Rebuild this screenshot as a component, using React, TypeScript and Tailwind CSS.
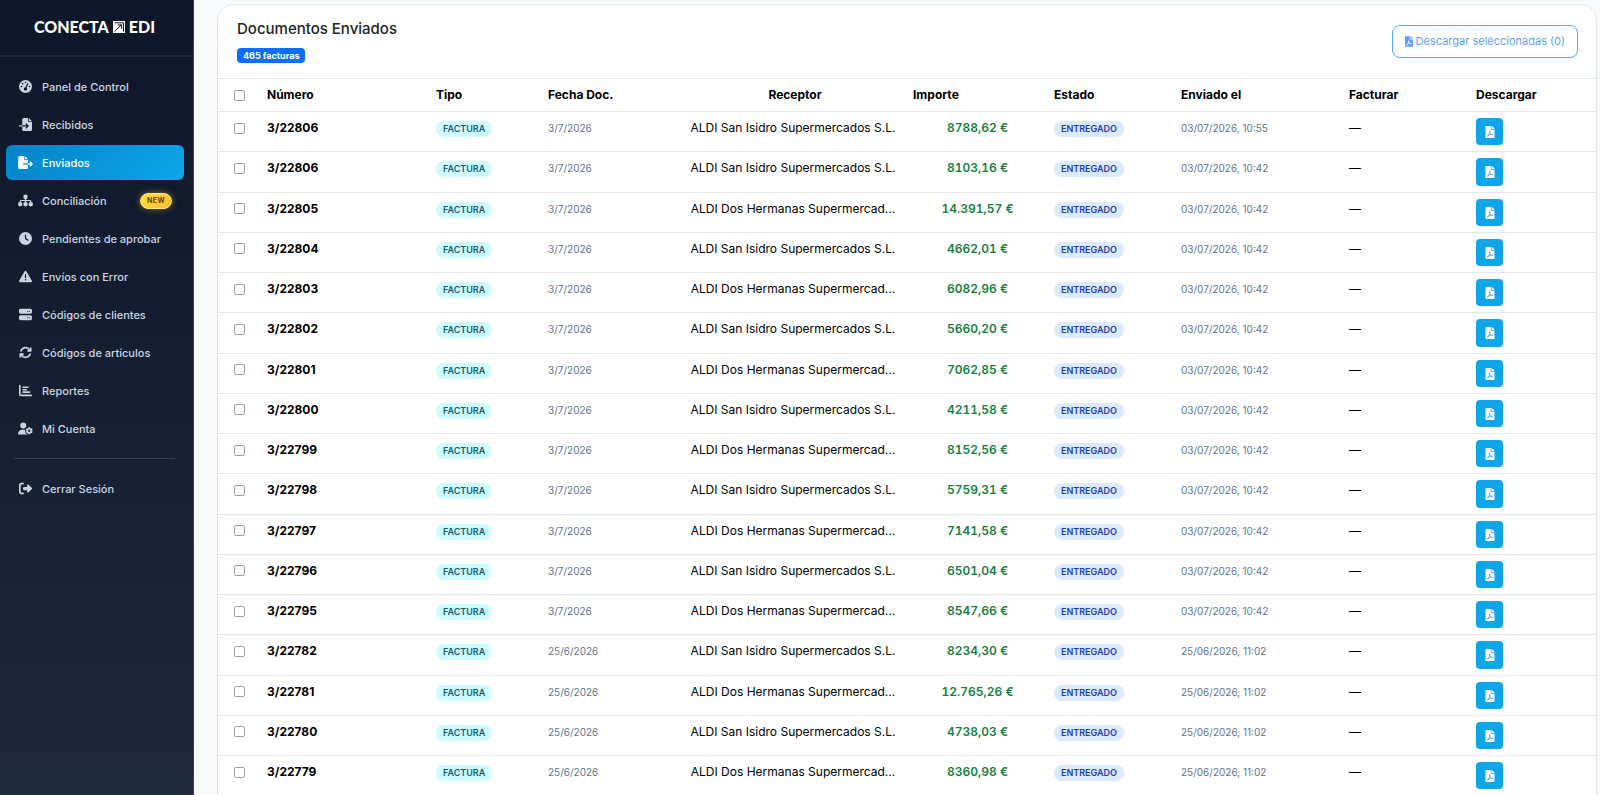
import type { IconType } from 'react-icons'
import {
  FaGaugeHigh,
  FaFileImport,
  FaFileExport,
  FaSitemap,
  FaClock,
  FaTriangleExclamation,
  FaServer,
  FaArrowsRotate,
  FaChartBar,
  FaUserGear,
  FaRightFromBracket,
} from 'react-icons/fa6'
import { FaFilePdf } from 'react-icons/fa'

type NavItem = { label: string; icon: IconType; active?: boolean; isNew?: boolean }

const navItems: NavItem[] = [
  { label: 'Panel de Control', icon: FaGaugeHigh },
  { label: 'Recibidos', icon: FaFileImport },
  { label: 'Enviados', icon: FaFileExport, active: true },
  { label: 'Conciliación', icon: FaSitemap, isNew: true },
  { label: 'Pendientes de aprobar', icon: FaClock },
  { label: 'Envíos con Error', icon: FaTriangleExclamation },
  { label: 'Códigos de clientes', icon: FaServer },
  { label: 'Códigos de artículos', icon: FaArrowsRotate },
  { label: 'Reportes', icon: FaChartBar },
  { label: 'Mi Cuenta', icon: FaUserGear },
]

const SAN_ISIDRO = 'ALDI San Isidro Supermercados S.L.'
const DOS_HERMANAS = 'ALDI Dos Hermanas Supermercad...'

type Documento = [numero: string, fecha: string, receptor: string, importe: string, enviado: string]

const documentos: Documento[] = [
  ['3/22806', '3/7/2026', SAN_ISIDRO, '8788,62 €', '03/07/2026, 10:55'],
  ['3/22806', '3/7/2026', SAN_ISIDRO, '8103,16 €', '03/07/2026, 10:42'],
  ['3/22805', '3/7/2026', DOS_HERMANAS, '14.391,57 €', '03/07/2026, 10:42'],
  ['3/22804', '3/7/2026', SAN_ISIDRO, '4662,01 €', '03/07/2026, 10:42'],
  ['3/22803', '3/7/2026', DOS_HERMANAS, '6082,96 €', '03/07/2026, 10:42'],
  ['3/22802', '3/7/2026', SAN_ISIDRO, '5660,20 €', '03/07/2026, 10:42'],
  ['3/22801', '3/7/2026', DOS_HERMANAS, '7062,85 €', '03/07/2026, 10:42'],
  ['3/22800', '3/7/2026', SAN_ISIDRO, '4211,58 €', '03/07/2026, 10:42'],
  ['3/22799', '3/7/2026', DOS_HERMANAS, '8152,56 €', '03/07/2026, 10:42'],
  ['3/22798', '3/7/2026', SAN_ISIDRO, '5759,31 €', '03/07/2026, 10:42'],
  ['3/22797', '3/7/2026', DOS_HERMANAS, '7141,58 €', '03/07/2026, 10:42'],
  ['3/22796', '3/7/2026', SAN_ISIDRO, '6501,04 €', '03/07/2026, 10:42'],
  ['3/22795', '3/7/2026', DOS_HERMANAS, '8547,66 €', '03/07/2026, 10:42'],
  ['3/22782', '25/6/2026', SAN_ISIDRO, '8234,30 €', '25/06/2026, 11:02'],
  ['3/22781', '25/6/2026', DOS_HERMANAS, '12.765,26 €', '25/06/2026, 11:02'],
  ['3/22780', '25/6/2026', SAN_ISIDRO, '4738,03 €', '25/06/2026, 11:02'],
  ['3/22779', '25/6/2026', DOS_HERMANAS, '8360,98 €', '25/06/2026, 11:02'],
]

function Logo() {
  return (
    <div className="flex h-[57px] shrink-0 items-center justify-center gap-1 border-b-2 border-slate-800 pr-1 pb-px font-['Lato',sans-serif] text-[16px] leading-5 font-black text-white">
      <span>CONECTA</span>
      <svg viewBox="0 0 12 12" className="size-3" aria-hidden="true">
        <path d="M0 0h12v12H0z" fill="#fff" />
        <path d="M1.5 1.8h9v8.8M1.5 10.5l7-7M4.8 3.9h3.8v3.8" fill="none" stroke="#0f172a" strokeWidth="1" />
      </svg>
      <span>EDI</span>
    </div>
  )
}

function NavLink({ item }: { item: NavItem }) {
  const Icon = item.icon
  return (
    <a
      href="#"
      aria-current={item.active ? 'page' : undefined}
      className={
        item.active
          ? 'flex h-[35px] items-center gap-[9px] rounded-md bg-linear-[135deg] from-[#0284c7] to-[#0ea5e9] pr-3 pl-[11px] text-white'
          : 'flex h-[35px] items-center gap-[9px] rounded-md pr-3 pl-[11px] text-slate-300'
      }
    >
      <span className="flex w-4 justify-center">
        <Icon className="h-[13px] w-[15px] shrink-0" aria-hidden="true" />
      </span>
      <span>{item.label}</span>
      {item.isNew && (
        <span className="ml-auto rounded-full border border-[#fde68a] bg-linear-[135deg] from-[#fde047] to-[#fbbf24] px-1.5 text-[7px] leading-[14px] font-bold tracking-wider text-[#78350f] shadow-[0_0_6px_rgba(251,191,36,0.5)]">
          NEW
        </span>
      )}
    </a>
  )
}

function Sidebar() {
  return (
    <aside className="flex w-[194px] shrink-0 flex-col border-r border-slate-700 bg-linear-to-b from-[#0f172a] to-[#1e293b]">
      <Logo />
      <nav className="flex flex-col gap-[3px] pt-3 pr-[9px] pl-1.5 text-[11px] font-medium">
        {navItems.map((item) => (
          <NavLink key={item.label} item={item} />
        ))}
        <hr className="my-[9px] mr-[9px] ml-2 border-slate-700" />
        <NavLink item={{ label: 'Cerrar Sesión', icon: FaRightFromBracket }} />
      </nav>
    </aside>
  )
}

const badge = 'inline-block rounded-full px-[7px] text-[9px] leading-4 font-semibold'
const checkbox = 'block size-[11px] appearance-none rounded-xs border border-gray-400 bg-white checked:bg-sky-500'

function DocumentRow({ documento }: { documento: Documento }) {
  const [numero, fecha, receptor, importe, enviado] = documento
  return (
    <tr className="border-b border-gray-200 align-top *:px-2 *:py-1.5">
      <td>
        <div className="flex h-5 items-center justify-center pl-0.5">
          <input type="checkbox" aria-label={`Seleccionar ${numero}`} className={checkbox} />
        </div>
      </td>
      <td className="font-bold">{numero}</td>
      <td>
        <span className={`${badge} bg-[#cffafe] text-[#155e75]`}>FACTURA</span>
      </td>
      <td className="text-[10px] text-slate-500">{fecha}</td>
      <td className="text-center whitespace-nowrap">{receptor}</td>
      <td className="pl-3! text-center font-semibold text-[#15803d] tabular-nums">{importe}</td>
      <td>
        <span className={`${badge} bg-[#dbeafe] text-[#1e40af]`}>ENTREGADO</span>
      </td>
      <td className="text-[10px] text-slate-500">{enviado}</td>
      <td>—</td>
      <td>
        <button
          type="button"
          aria-label={`Descargar ${numero}`}
          className="block w-[27px] rounded-sm bg-[#0ea5e9] py-1 text-center text-[11px] leading-[1.75] text-white"
        >
          <FaFilePdf className="inline size-3 align-middle" aria-hidden="true" />
        </button>
      </td>
    </tr>
  )
}

export default function App() {
  return (
    <div className="flex h-screen overflow-hidden bg-slate-50 font-['Inter',sans-serif] text-[12px] leading-5 text-black">
      <Sidebar />
      <main className="min-w-0 flex-1 pt-1 pr-[3px] pl-[23px]">
        <section className="rounded-2xl border border-slate-200 bg-white pb-5 shadow-xs">
          <header className="flex items-center justify-between border-b border-slate-200 pt-3.5 pr-[18px] pb-[15px] pl-[19px]">
            <div>
              <h1 className="text-[15px] leading-5 font-medium text-[#212529]">Documentos Enviados</h1>
              <span className="mt-[9px] block w-fit rounded-sm bg-[#0d6efd] px-1.5 text-[9px] leading-[15px] font-bold text-white">
                465 facturas
              </span>
            </div>
            <button
              type="button"
              className="flex h-[33px] items-center gap-[3px] rounded-lg border border-[#619ffe] px-3 text-[11px] text-[#619ffe]"
            >
              <FaFilePdf className="h-[11px] w-2" aria-hidden="true" />
              Descargar seleccionadas (0)
            </button>
          </header>
          <table className="w-full table-fixed border-collapse">
            <colgroup>
              <col className="w-[41px]" />
              <col className="w-[169px]" />
              <col className="w-[112px]" />
              <col className="w-[141px]" />
              <col className="w-[224px]" />
              <col className="w-[141px]" />
              <col className="w-[127px]" />
              <col className="w-[168px]" />
              <col className="w-[127px]" />
              <col />
            </colgroup>
            <thead>
              <tr className="border-b border-gray-200 text-left *:px-2 *:py-1.5 *:font-bold">
                <th>
                  <div className="flex justify-center pl-0.5">
                    <input type="checkbox" aria-label="Seleccionar todo" className={checkbox} />
                  </div>
                </th>
                <th>Número</th>
                <th>Tipo</th>
                <th>Fecha Doc.</th>
                <th className="pl-3! text-center">Receptor</th>
                <th>Importe</th>
                <th>Estado</th>
                <th>Enviado el</th>
                <th>Facturar</th>
                <th>Descargar</th>
              </tr>
            </thead>
            <tbody>
              {documentos.map((documento, index) => (
                <DocumentRow key={index} documento={documento} />
              ))}
            </tbody>
          </table>
        </section>
      </main>
    </div>
  )
}
